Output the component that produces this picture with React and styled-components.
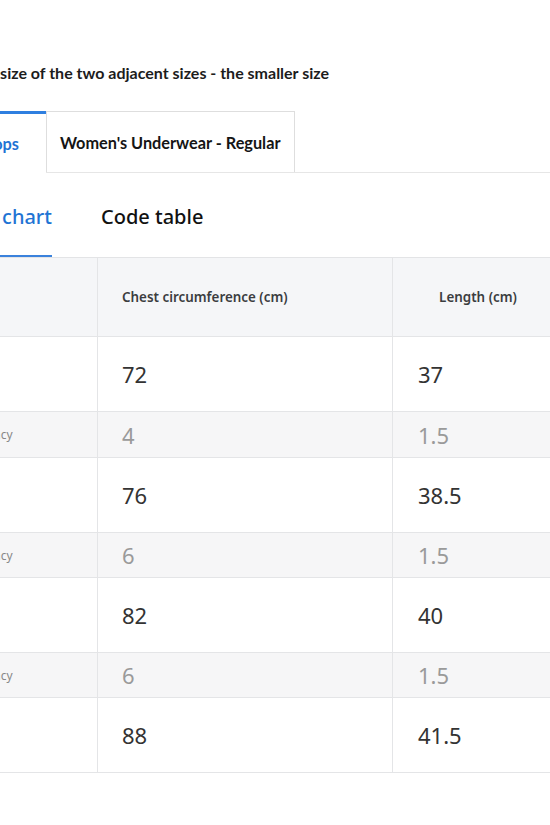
import React from "react";
import styled, { createGlobalStyle } from "styled-components";

const Global = createGlobalStyle`
  html, body { margin: 0; padding: 0; background: #fff; overflow: hidden; }
  body { font-family: "Noto Sans", "Liberation Sans", sans-serif; color: #222; }
`;

const Page = styled.div`
  margin-left: -140px;
  width: 700px;
  padding-top: 62px;
`;

const Note = styled.div`
  width: 469px;
  display: flex;
  justify-content: flex-end;
  font-family: Lato, "Noto Sans", sans-serif;
  font-weight: 700;
  font-size: 16px;
  line-height: 22px;
  color: #1c1c1c;
  white-space: nowrap;
`;

const CategoryBar = styled.div`
  display: flex;
  margin-top: 27px;
  border-bottom: 1px solid #e6e6e6;
`;

const CategoryTab = styled.div`
  box-sizing: border-box;
  display: flex;
  align-items: center;
  justify-content: ${(p) => (p.$active ? "flex-end" : "center")};
  width: ${(p) => (p.$width ? `${p.$width}px` : "auto")};
  padding: ${(p) => (p.$active ? "0 27px 0 0" : "0 13px")};
  font-family: Lato, "Noto Sans", sans-serif;
  font-weight: 700;
  font-size: 16.3px;
  white-space: nowrap;
  color: ${(p) => (p.$active ? "#1f74d4" : "#151515")};
  background: #fff;
  border-top: ${(p) => (p.$active ? "3px solid #2f7fe0" : "1px solid #dedede")};
  border-left: ${(p) => (p.$active ? "none" : "1px solid #dedede")};
  border-right: ${(p) => (p.$active ? "none" : "1px solid #dedede")};
  margin-bottom: ${(p) => (p.$active ? "-1px" : "0")};
  height: ${(p) => (p.$active ? "62px" : "61px")};
`;

const ViewBar = styled.div`
  display: flex;
  gap: 49px;
`;

const ViewTab = styled.div`
  display: flex;
  justify-content: flex-end;
  width: ${(p) => (p.$width ? `${p.$width}px` : "auto")};
`;

const ViewLabel = styled.span`
  display: block;
  padding-top: 30px;
  padding-bottom: 24px;
  font-size: 20px;
  line-height: 28px;
  font-weight: 500;
  white-space: nowrap;
  color: ${(p) => (p.$active ? "#1f74d4" : "#111")};
  border-bottom: 2px solid ${(p) => (p.$active ? "#3a82dc" : "transparent")};
`;

const Table = styled.div`
  display: grid;
  grid-template-columns: 238px 295px 170px;
  border-top: 1px solid #e3e4e6;
`;

const Cell = styled.div`
  box-sizing: border-box;
  height: ${(p) => p.$h}px;
  display: flex;
  align-items: center;
  justify-content: ${(p) => (p.$center ? "center" : "flex-start")};
  padding-left: ${(p) => (p.$center ? 0 : 24)}px;
  background: ${(p) => p.$bg};
  border-bottom: 1px solid #e4e5e7;
  border-right: ${(p) => (p.$last ? "none" : "1px solid #e4e5e7")};
  white-space: nowrap;
`;

const HeadText = styled.span`
  font-size: 13.4px;
  font-weight: 600;
  color: #3b3d40;
`;

const Value = styled.span`
  font-size: 22px;
  color: ${(p) => (p.$muted ? "#9a9a9a" : "#333")};
  padding-left: ${(p) => (p.$shift ? 1 : 0)}px;
`;

const Label = styled.span`
  font-size: 12px;
  color: ${(p) => (p.$muted ? "#888" : "#333")};
`;

const rows = [
  { label: "S", chest: "72", length: "37", h: 75 },
  { label: "Discrepancy", chest: "4", length: "1.5", diff: true, h: 46 },
  { label: "M", chest: "76", length: "38.5", h: 75 },
  { label: "Discrepancy", chest: "6", length: "1.5", diff: true, h: 45 },
  { label: "L", chest: "82", length: "40", h: 75 },
  { label: "Discrepancy", chest: "6", length: "1.5", diff: true, h: 45 },
  { label: "XL", chest: "88", length: "41.5", h: 75 },
];

export default function App() {
  return (
    <>
      <Global />
      <Page>
        <Note>
          <span>Size discrepancy = the larger size of the two adjacent sizes - the smaller size</span>
        </Note>
        <CategoryBar>
          <CategoryTab $active $width={186}>Women's Tops</CategoryTab>
          <CategoryTab>Women's Underwear - Regular</CategoryTab>
        </CategoryBar>
        <ViewBar>
          <ViewTab $width={192}>
            <ViewLabel $active>Size chart</ViewLabel>
          </ViewTab>
          <ViewTab>
            <ViewLabel>Code table</ViewLabel>
          </ViewTab>
        </ViewBar>
        <Table>
          <Cell $h={79} $bg="#f5f6f8" $center>
            <HeadText>Size</HeadText>
          </Cell>
          <Cell $h={79} $bg="#f5f6f8">
            <HeadText>Chest circumference (cm)</HeadText>
          </Cell>
          <Cell $h={79} $bg="#f5f6f8" $center $last>
            <HeadText>Length (cm)</HeadText>
          </Cell>
          {rows.map((r, i) => {
            const bg = r.diff ? "#f6f6f7" : "#fff";
            return (
              <React.Fragment key={i}>
                <Cell $h={r.h} $bg={bg} $center>
                  <Label $muted={r.diff}>{r.label}</Label>
                </Cell>
                <Cell $h={r.h} $bg={bg}>
                  <Value $muted={r.diff}>{r.chest}</Value>
                </Cell>
                <Cell $h={r.h} $bg={bg} $last>
                  <Value $muted={r.diff} $shift>{r.length}</Value>
                </Cell>
              </React.Fragment>
            );
          })}
        </Table>
      </Page>
    </>
  );
}
